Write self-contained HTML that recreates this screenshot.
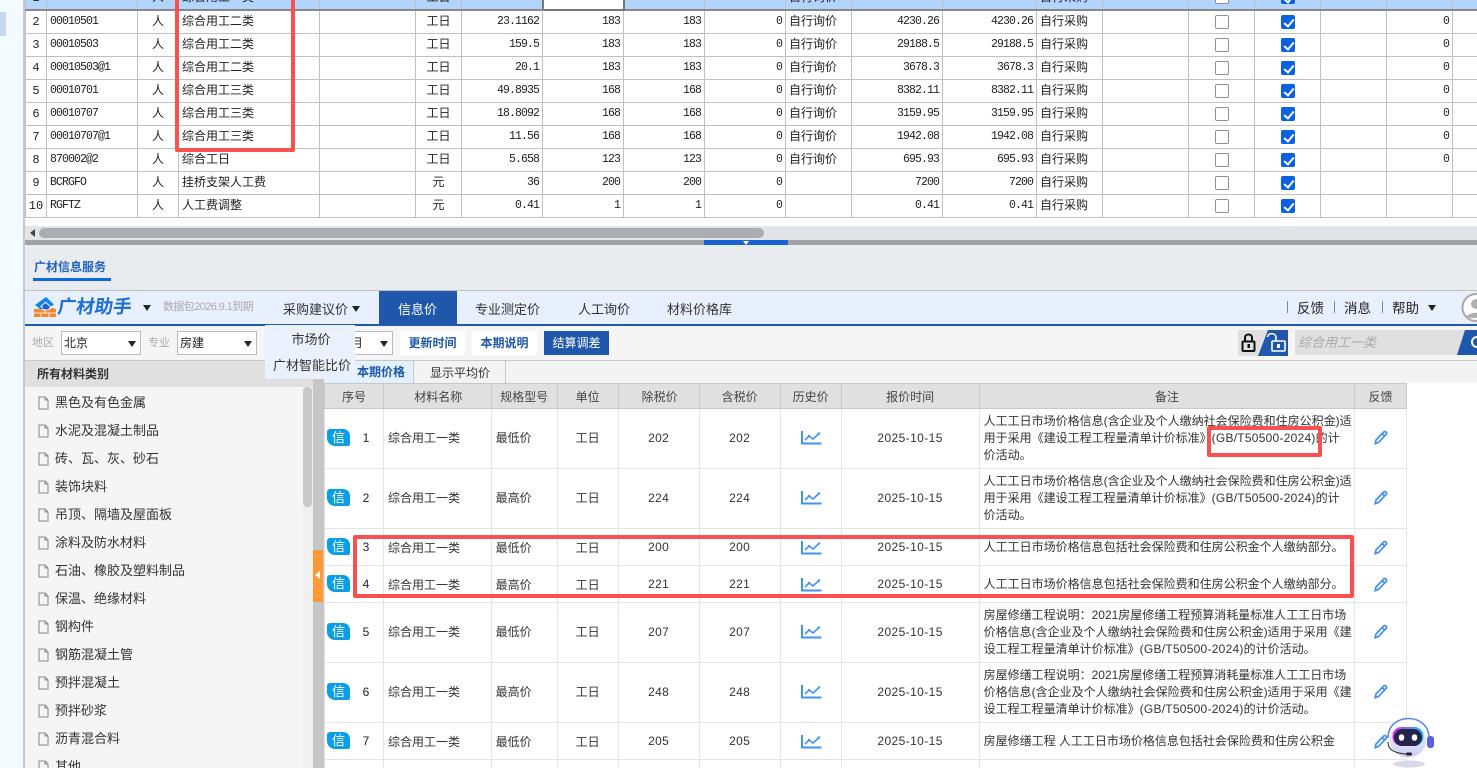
<!DOCTYPE html>
<html lang="zh"><head><meta charset="utf-8"><title>广材信息服务</title>
<style>
*{box-sizing:border-box}
html,body{margin:0;padding:0;width:1477px;height:768px;overflow:hidden;background:#f3fbff;font-family:"Liberation Sans","Noto Sans CJK SC",sans-serif;color:#333;font-size:12px}
body{position:relative}
.a{position:absolute}
.a,.t{white-space:nowrap}
#top{position:absolute;left:25px;top:-15px;border-collapse:collapse;table-layout:fixed;width:1493px;background:#fff;font-family:"Liberation Mono","WenQuanYi Zen Hei",monospace;color:#222}
#top td{height:23px;border:1px solid #c0c0c0;padding:0 3px;font-size:12px;line-height:22px;overflow:hidden;white-space:nowrap}
#top td.n{font-size:11.5px;letter-spacing:-.9px;text-align:right}
#top td.m{text-align:center}
#top td.s{font-size:11.5px;letter-spacing:-.9px}
#top tr.sel td{background:#b3d4fd;border-bottom:2px solid #888}
#top tr.sel td.w{background:#fff;border:2px solid #777}
.c{display:block;width:14px;height:14px;border:1px solid #909090;border-radius:2px;background:#fff;margin:-1px auto 0;position:relative}
.c.y{background:#0b62e0;border-color:#0b62e0}
.c.y:after{content:"";position:absolute;left:4px;top:1.5px;width:4px;height:8px;border:solid #fff;border-width:0 2px 2px 0;transform:rotate(40deg)}
#low{position:absolute;left:324px;top:383px;border-collapse:collapse;table-layout:fixed;width:1082px;background:#fff;color:#333}
#low td,#low th{border:1px solid #e4e4e4;padding:0;text-align:center;font-weight:normal;font-size:12px;position:relative;white-space:nowrap;overflow:hidden}
#low th{background:#e0e0e0;border-color:#c8c8c8;height:25px;color:#444}
#low td.l{text-align:left;padding-left:4px}
#low td.r{text-align:left;padding-left:4px;line-height:17px}
#low td.no{padding-left:24px;color:#222}
#low td.v{letter-spacing:.3px}
#low td.d{letter-spacing:.4px}
#low tr.h td:not(.r){padding-bottom:2px}
#low tr.h td.no{padding-left:24px}
#low tr.h .b{margin-top:-10px}
#low svg[width="21"]{position:relative;left:1px}
.g{letter-spacing:.25px}
.b{position:absolute;left:2px;top:50%;margin-top:-9px;width:23px;height:17px;background:#0a9ee8;color:#fff;border-radius:3px 7px 2px 8px;line-height:17px;font-size:13px;text-align:center}
.tree{left:55px;font-size:13px;color:#333;line-height:18px}
.doc{left:38px}
.car{width:0;height:0;border-left:4.5px solid transparent;border-right:4.5px solid transparent;border-top:6px solid #222}
.sel2{top:331px;height:24px;background:#fff;border:1px solid #bbb;padding-left:2px;line-height:23px;color:#222}
.btn{top:331px;height:24px;width:65px;background:#fff;color:#1f58ab;font-weight:bold;text-align:center;line-height:24px}
.nav{top:301px;font-size:13px;line-height:18px;color:#333}
.red{position:absolute;border:4px solid #fa5050;border-radius:2px}
svg{display:block}
</style></head><body>
<svg width="0" height="0" style="position:absolute"><defs>
<symbol id="d" viewBox="0 0 11 14"><path d="M1 1H7L10 4V13H1Z M7 1V4H10" fill="none" stroke="#888" stroke-width="1"/></symbol>
<symbol id="tr" viewBox="0 0 21 15"><path d="M1 1V13.5H20.5" fill="none" stroke="#3f93f5" stroke-width="2"/><path d="M4 10L8 6L12 9L18 3.5" fill="none" stroke="#3f93f5" stroke-width="1.6"/><circle cx="8" cy="6" r="1.2" fill="#3f93f5"/><circle cx="18" cy="3.5" r="1.2" fill="#3f93f5"/></symbol>
<symbol id="p" viewBox="0 0 14 15"><path d="M2 10L9.5 2.2C10.3 1.4 11.3 1.4 12 2.1C12.8 2.9 12.8 3.8 12 4.6L4.5 12.5L1.2 13.6Z M8.2 3.6L10.8 6.1" fill="none" stroke="#3f8ff0" stroke-width="1.7"/></symbol>
</defs></svg>

<div class="a" style="left:0;top:12px;width:6px;height:24px;background:#c9d7f0"></div>
<div class="a" style="left:23px;top:0;width:2px;height:768px;background:#c4c8cc"></div>

<table id="top"><colgroup><col style="width:21px"><col style="width:91px"><col style="width:41px"><col style="width:141px"><col style="width:96px"><col style="width:46px"><col style="width:81px"><col style="width:81px"><col style="width:81px"><col style="width:81px"><col style="width:66px"><col style="width:91px"><col style="width:94px"><col style="width:66px"><col style="width:86px"><col style="width:66px"><col style="width:66px"><col style="width:66px"><col style="width:66px"><col style="width:66px"></colgroup>
<tr class="sel"><td class="m">1</td><td class="s">00010301</td><td class="m">人</td><td>综合用工一类</td><td></td><td class="m">工日</td><td class="n">13.0116</td><td class="n w">200.6</td><td class="n">200.6</td><td class="n">0</td><td>自行询价</td><td class="n">2517.05</td><td class="n">2517.05</td><td>自行采购</td><td></td><td><span class="c"></span></td><td><span class="c y"></span></td><td></td><td class="n">0</td><td></td></tr>
<tr><td class="m">2</td><td class="s">00010501</td><td class="m">人</td><td>综合用工二类</td><td></td><td class="m">工日</td><td class="n">23.1162</td><td class="n">183</td><td class="n">183</td><td class="n">0</td><td>自行询价</td><td class="n">4230.26</td><td class="n">4230.26</td><td>自行采购</td><td></td><td><span class="c"></span></td><td><span class="c y"></span></td><td></td><td class="n">0</td><td></td></tr>
<tr><td class="m">3</td><td class="s">00010503</td><td class="m">人</td><td>综合用工二类</td><td></td><td class="m">工日</td><td class="n">159.5</td><td class="n">183</td><td class="n">183</td><td class="n">0</td><td>自行询价</td><td class="n">29188.5</td><td class="n">29188.5</td><td>自行采购</td><td></td><td><span class="c"></span></td><td><span class="c y"></span></td><td></td><td class="n">0</td><td></td></tr>
<tr><td class="m">4</td><td class="s">00010503@1</td><td class="m">人</td><td>综合用工二类</td><td></td><td class="m">工日</td><td class="n">20.1</td><td class="n">183</td><td class="n">183</td><td class="n">0</td><td>自行询价</td><td class="n">3678.3</td><td class="n">3678.3</td><td>自行采购</td><td></td><td><span class="c"></span></td><td><span class="c y"></span></td><td></td><td class="n">0</td><td></td></tr>
<tr><td class="m">5</td><td class="s">00010701</td><td class="m">人</td><td>综合用工三类</td><td></td><td class="m">工日</td><td class="n">49.8935</td><td class="n">168</td><td class="n">168</td><td class="n">0</td><td>自行询价</td><td class="n">8382.11</td><td class="n">8382.11</td><td>自行采购</td><td></td><td><span class="c"></span></td><td><span class="c y"></span></td><td></td><td class="n">0</td><td></td></tr>
<tr><td class="m">6</td><td class="s">00010707</td><td class="m">人</td><td>综合用工三类</td><td></td><td class="m">工日</td><td class="n">18.8092</td><td class="n">168</td><td class="n">168</td><td class="n">0</td><td>自行询价</td><td class="n">3159.95</td><td class="n">3159.95</td><td>自行采购</td><td></td><td><span class="c"></span></td><td><span class="c y"></span></td><td></td><td class="n">0</td><td></td></tr>
<tr><td class="m">7</td><td class="s">00010707@1</td><td class="m">人</td><td>综合用工三类</td><td></td><td class="m">工日</td><td class="n">11.56</td><td class="n">168</td><td class="n">168</td><td class="n">0</td><td>自行询价</td><td class="n">1942.08</td><td class="n">1942.08</td><td>自行采购</td><td></td><td><span class="c"></span></td><td><span class="c y"></span></td><td></td><td class="n">0</td><td></td></tr>
<tr><td class="m">8</td><td class="s">870002@2</td><td class="m">人</td><td>综合工日</td><td></td><td class="m">工日</td><td class="n">5.658</td><td class="n">123</td><td class="n">123</td><td class="n">0</td><td>自行询价</td><td class="n">695.93</td><td class="n">695.93</td><td>自行采购</td><td></td><td><span class="c"></span></td><td><span class="c y"></span></td><td></td><td class="n">0</td><td></td></tr>
<tr><td class="m">9</td><td class="s">BCRGFO</td><td class="m">人</td><td>挂桥支架人工费</td><td></td><td class="m">元</td><td class="n">36</td><td class="n">200</td><td class="n">200</td><td class="n">0</td><td></td><td class="n">7200</td><td class="n">7200</td><td>自行采购</td><td></td><td><span class="c"></span></td><td><span class="c y"></span></td><td></td><td></td><td></td></tr>
<tr><td class="m" style="padding:0">10</td><td class="s">RGFTZ</td><td class="m">人</td><td>人工费调整</td><td></td><td class="m">元</td><td class="n">0.41</td><td class="n">1</td><td class="n">1</td><td class="n">0</td><td></td><td class="n">0.41</td><td class="n">0.41</td><td>自行采购</td><td></td><td><span class="c"></span></td><td><span class="c y"></span></td><td></td><td></td><td></td></tr>
</table>

<div class="a" style="left:25px;top:218px;width:1452px;height:8px;background:#fff"></div>
<div class="a" style="left:25px;top:226px;width:1452px;height:14px;background:#e3e4e7"></div>
<div class="a" style="left:39px;top:228px;width:725px;height:10px;background:#abadb3;border-radius:5px"></div>
<div class="a" style="left:30px;top:229px;width:0;height:0;border-top:4px solid transparent;border-bottom:4px solid transparent;border-right:5px solid #444"></div>
<div class="a" style="left:25px;top:240px;width:1452px;height:5px;background:#a0a2a8"></div>
<div class="a" style="left:704px;top:240px;width:84px;height:5px;background:#1763d0"></div>
<div class="a" style="left:743px;top:241px;width:0;height:0;border-left:3px solid transparent;border-right:3px solid transparent;border-top:4px solid #fff"></div>

<div class="a" style="left:25px;top:245px;width:1452px;height:46px;background:#e9ecef"></div>
<div class="a" style="left:34px;top:258px;font-weight:bold;color:#1f62c0;line-height:18px">广材信息服务</div>
<div class="a" style="left:33px;top:278px;width:78px;height:3px;background:#0f67e0"></div>
<div class="a" style="left:25px;top:290px;width:1452px;height:1px;background:#c0c0c0"></div>

<div class="a" style="left:25px;top:291px;width:1452px;height:33px;background:#e8f0fe"></div>
<div class="a" style="left:25px;top:324px;width:1452px;height:2px;background:#1e5aae"></div>
<div class="a" style="left:379px;top:291px;width:78px;height:33px;background:#1f58ab"></div>

<svg class="a" style="left:34px;top:297px" width="22" height="20" viewBox="0 0 22 20"><path d="M12 0L20 7.500L17 9.500L11.500 4.500L6 9.500L10 12H6L1 8Z" fill="#0f86ee"/><path d="M8 9L11.500 6L16 10L14 12.500H10Z" fill="#1c5fc8"/><path d="M0 12H6L10 13.500H14L18 11L22 12V20H0Z" fill="#f5882e"/><path d="M0 16H22M7 16V20M15 16V20M11 12V16" stroke="#fff" stroke-width=".8"/></svg>
<div class="a" style="left:56px;top:295px;font-size:18.5px;font-weight:bold;color:#1e6fd6;line-height:24px;transform:skewX(-8deg);transform-origin:left bottom">广材助手</div>
<div class="a car" style="left:143px;top:305px"></div>
<div class="a" style="left:163px;top:300px;font-size:11px;color:#aaa;line-height:15px;letter-spacing:-.6px">数据包2026.9.1到期</div>
<div class="a nav" style="left:283px">采购建议价</div>
<div class="a car" style="left:352px;top:306px"></div>
<div class="a nav" style="left:398px;color:#fff">信息价</div>
<div class="a nav" style="left:475px">专业测定价</div>
<div class="a nav" style="left:578px">人工询价</div>
<div class="a nav" style="left:667px">材料价格库</div>
<div class="a" style="left:1287px;top:301px;width:1px;height:12px;background:#888"></div>
<div class="a" style="left:1297px;top:299px;font-size:13.5px;line-height:20px;color:#222">反馈</div>
<div class="a" style="left:1334px;top:301px;width:1px;height:12px;background:#888"></div>
<div class="a" style="left:1344px;top:299px;font-size:13.5px;line-height:20px;color:#222">消息</div>
<div class="a" style="left:1382px;top:301px;width:1px;height:12px;background:#888"></div>
<div class="a" style="left:1392px;top:299px;font-size:13.5px;line-height:20px;color:#222">帮助</div>
<div class="a car" style="left:1428px;top:305px"></div>
<svg class="a" style="left:1461px;top:293px" width="16" height="29" viewBox="0 0 16 29"><circle cx="15" cy="14.500" r="13.500" fill="#fff" stroke="#a8a8a8" stroke-width="2"/><circle cx="15" cy="11" r="5" fill="#b0b0b0"/><path d="M5 25C7 18 23 18 25 25Z" fill="#b0b0b0"/></svg>

<div class="a" style="left:25px;top:326px;width:1452px;height:34px;background:#f5f5f5"></div>
<div class="a" style="left:25px;top:360px;width:1452px;height:1px;background:#c8c8c8"></div>
<div class="a" style="left:32px;top:335px;font-size:11px;color:#aaa;line-height:16px">地区</div>
<div class="a sel2" style="left:61px;width:80px">北京</div><div class="a car" style="left:128px;top:341px"></div>
<div class="a" style="left:148px;top:335px;font-size:11px;color:#aaa;line-height:16px">专业</div>
<div class="a sel2" style="left:177px;width:80px">房建</div><div class="a car" style="left:244px;top:341px"></div>
<div class="a sel2" style="left:300px;width:93px;padding-left:50px">月</div><div class="a car" style="left:380px;top:341px"></div>
<div class="a btn" style="left:400px">更新时间</div>
<div class="a btn" style="left:472px">本期说明</div>
<div class="a btn" style="left:544px;background:#1f58ab;color:#fff;font-weight:normal">结算调差</div>
<div class="a" style="left:1238px;top:330px;width:50px;height:26px;background:#e0e0e0"></div>
<svg class="a" style="left:1238px;top:330px" width="50" height="26" viewBox="0 0 50 26"><path d="M20 26L30 0H50V26Z" fill="#1f58ab"/><rect x="4.500" y="11.500" width="12" height="9.500" rx="1" fill="#e0e0e0" stroke="#111" stroke-width="2"/><path d="M7 11V7.500C7 3.500 14 3.500 14 7.500V11" fill="none" stroke="#111" stroke-width="2"/><rect x="9.500" y="14" width="2.500" height="4" fill="#111"/><rect x="34" y="11" width="13" height="10" rx="1" fill="none" stroke="#fff" stroke-width="1.600"/><path d="M29.500 7C30 2.500 37.500 2.500 38 7V11" fill="none" stroke="#fff" stroke-width="1.600"/><rect x="39" y="14" width="3" height="4" fill="#fff"/></svg>
<div class="a" style="left:1295px;top:330px;width:182px;height:25px;background:#e0e0e0"></div>
<div class="a" style="left:1298px;top:333px;font-size:13px;font-style:italic;color:#aaa;line-height:19px">综合用工一类</div>
<svg class="a" style="left:1457px;top:330px" width="20" height="25" viewBox="0 0 20 25"><path d="M0 25L8 0H20V25Z" fill="#1f58ab"/><circle cx="20" cy="12" r="5" fill="none" stroke="#fff" stroke-width="2"/></svg>

<div class="a" style="left:25px;top:361px;width:288px;height:407px;background:#f5f5f5"></div>
<div class="a" style="left:25px;top:361px;width:288px;height:26px;background:#e0e0e0"></div>
<div class="a" style="left:37px;top:366px;font-weight:bold;color:#333;line-height:17px">所有材料类别</div>
<div class="a" style="left:303px;top:387px;width:10px;height:381px;background:#f0f0f0"></div>
<div class="a" style="left:303px;top:387px;width:9px;height:120px;background:#c9c9c9;border-radius:4px"></div>
<div class="a" style="left:313px;top:361px;width:11px;height:407px;background:#c6c6c6"></div>
<div class="a" style="left:313px;top:550px;width:10px;height:52px;background:#ff9933"></div>
<div class="a" style="left:315px;top:571px;width:0;height:0;border-top:4.500px solid transparent;border-bottom:4.500px solid transparent;border-right:5px solid #fff"></div>

<svg class="a doc" style="top:396px" width="11" height="14"><use href="#d"/></svg><div class="a tree" style="top:394px">黑色及有色金属</div>
<svg class="a doc" style="top:424px" width="11" height="14"><use href="#d"/></svg><div class="a tree" style="top:422px">水泥及混凝土制品</div>
<svg class="a doc" style="top:452px" width="11" height="14"><use href="#d"/></svg><div class="a tree" style="top:450px">砖、瓦、灰、砂石</div>
<svg class="a doc" style="top:480px" width="11" height="14"><use href="#d"/></svg><div class="a tree" style="top:478px">装饰块料</div>
<svg class="a doc" style="top:508px" width="11" height="14"><use href="#d"/></svg><div class="a tree" style="top:506px">吊顶、隔墙及屋面板</div>
<svg class="a doc" style="top:536px" width="11" height="14"><use href="#d"/></svg><div class="a tree" style="top:534px">涂料及防水材料</div>
<svg class="a doc" style="top:564px" width="11" height="14"><use href="#d"/></svg><div class="a tree" style="top:562px">石油、橡胶及塑料制品</div>
<svg class="a doc" style="top:592px" width="11" height="14"><use href="#d"/></svg><div class="a tree" style="top:590px">保温、绝缘材料</div>
<svg class="a doc" style="top:620px" width="11" height="14"><use href="#d"/></svg><div class="a tree" style="top:618px">钢构件</div>
<svg class="a doc" style="top:648px" width="11" height="14"><use href="#d"/></svg><div class="a tree" style="top:646px">钢筋混凝土管</div>
<svg class="a doc" style="top:676px" width="11" height="14"><use href="#d"/></svg><div class="a tree" style="top:674px">预拌混凝土</div>
<svg class="a doc" style="top:704px" width="11" height="14"><use href="#d"/></svg><div class="a tree" style="top:702px">预拌砂浆</div>
<svg class="a doc" style="top:732px" width="11" height="14"><use href="#d"/></svg><div class="a tree" style="top:730px">沥青混合料</div>
<svg class="a doc" style="top:760px" width="11" height="14"><use href="#d"/></svg><div class="a tree" style="top:758px">其他</div>

<div class="a" style="left:324px;top:361px;width:1153px;height:22px;background:#f3f3f3"></div>
<div class="a" style="left:324px;top:361px;width:90px;height:22px;background:#e3f0fe;border-right:1px solid #c8c8c8"></div>
<div class="a" style="left:357px;top:364px;font-weight:bold;color:#1f58ab;line-height:17px">本期价格</div>
<div class="a" style="left:415px;top:361px;width:91px;height:22px;border-right:1px solid #c8c8c8;text-align:center;line-height:24px">显示平均价</div>
<div class="a" style="left:324px;top:383px;width:1153px;height:385px;background:#fff"></div>

<div class="a" style="left:0;top:0;width:1477px;height:768px;overflow:hidden">
<table id="low"><colgroup><col style="width:59px"><col style="width:107.600px"><col style="width:66px"><col style="width:61px"><col style="width:81px"><col style="width:81px"><col style="width:61px"><col style="width:138px"><col style="width:375.500px"><col style="width:51.900px"></colgroup>
<tr><th>序号</th><th style="padding-left:2px">材料名称</th><th>规格型号</th><th>单位</th><th style="padding-left:2px">除税价</th><th>含税价</th><th>历史价</th><th>报价时间</th><th>备注</th><th>反馈</th></tr>
<tr class="h" style="height:60px"><td class="no"><span class="b">信</span>1</td><td class="l">综合用工一类</td><td class="l">最低价</td><td>工日</td><td class="v">202</td><td class="v">202</td><td><svg width="21" height="15" style="margin:auto"><use href="#tr"/></svg></td><td class="d">2025-10-15</td><td class="r">人工工日市场价格信息(含企业及个人缴纳社会保险费和住房公积金)适<br>用于采用《建设工程工程量清单计价标准》<span class="g">(GB/T50500-2024)</span>的计<br>价活动。</td><td><svg width="14" height="15" style="margin:auto"><use href="#p"/></svg></td></tr>
<tr class="h" style="height:60px"><td class="no"><span class="b">信</span>2</td><td class="l">综合用工一类</td><td class="l">最高价</td><td>工日</td><td class="v">224</td><td class="v">224</td><td><svg width="21" height="15" style="margin:auto"><use href="#tr"/></svg></td><td class="d">2025-10-15</td><td class="r">人工工日市场价格信息(含企业及个人缴纳社会保险费和住房公积金)适<br>用于采用《建设工程工程量清单计价标准》<span class="g">(GB/T50500-2024)</span>的计<br>价活动。</td><td><svg width="14" height="15" style="margin:auto"><use href="#p"/></svg></td></tr>
<tr style="height:37px"><td class="no"><span class="b">信</span>3</td><td class="l">综合用工一类</td><td class="l">最低价</td><td>工日</td><td class="v">200</td><td class="v">200</td><td><svg width="21" height="15" style="margin:auto"><use href="#tr"/></svg></td><td class="d">2025-10-15</td><td class="r">人工工日市场价格信息包括社会保险费和住房公积金个人缴纳部分。</td><td><svg width="14" height="15" style="margin:auto"><use href="#p"/></svg></td></tr>
<tr style="height:37px"><td class="no"><span class="b">信</span>4</td><td class="l">综合用工一类</td><td class="l">最高价</td><td>工日</td><td class="v">221</td><td class="v">221</td><td><svg width="21" height="15" style="margin:auto"><use href="#tr"/></svg></td><td class="d">2025-10-15</td><td class="r">人工工日市场价格信息包括社会保险费和住房公积金个人缴纳部分。</td><td><svg width="14" height="15" style="margin:auto"><use href="#p"/></svg></td></tr>
<tr class="h" style="height:60px"><td class="no"><span class="b">信</span>5</td><td class="l">综合用工一类</td><td class="l">最低价</td><td>工日</td><td class="v">207</td><td class="v">207</td><td><svg width="21" height="15" style="margin:auto"><use href="#tr"/></svg></td><td class="d">2025-10-15</td><td class="r">房屋修缮工程说明：2021房屋修缮工程预算消耗量标准人工工日市场<br>价格信息(含企业及个人缴纳社会保险费和住房公积金)适用于采用《建<br>设工程工程量清单计价标准》<span class="g">(GB/T50500-2024)</span>的计价活动。</td><td><svg width="14" height="15" style="margin:auto"><use href="#p"/></svg></td></tr>
<tr class="h" style="height:60px"><td class="no"><span class="b">信</span>6</td><td class="l">综合用工一类</td><td class="l">最高价</td><td>工日</td><td class="v">248</td><td class="v">248</td><td><svg width="21" height="15" style="margin:auto"><use href="#tr"/></svg></td><td class="d">2025-10-15</td><td class="r">房屋修缮工程说明：2021房屋修缮工程预算消耗量标准人工工日市场<br>价格信息(含企业及个人缴纳社会保险费和住房公积金)适用于采用《建<br>设工程工程量清单计价标准》<span class="g">(GB/T50500-2024)</span>的计价活动。</td><td><svg width="14" height="15" style="margin:auto"><use href="#p"/></svg></td></tr>
<tr style="height:37px"><td class="no"><span class="b">信</span>7</td><td class="l">综合用工一类</td><td class="l">最低价</td><td>工日</td><td class="v">205</td><td class="v">205</td><td><svg width="21" height="15" style="margin:auto"><use href="#tr"/></svg></td><td class="d">2025-10-15</td><td class="r">房屋修缮工程 人工工日市场价格信息包括社会保险费和住房公积金</td><td><svg width="14" height="15" style="margin:auto"><use href="#p"/></svg></td></tr>
<tr style="height:37px"><td></td><td></td><td></td><td></td><td></td><td></td><td></td><td></td><td></td><td></td></tr>
</table>
</div>

<div class="a" style="left:265px;top:325px;width:90px;height:54px;background:#eaf1fd"></div>
<div class="a" style="left:266px;top:331px;width:90px;text-align:center;font-size:13px;line-height:18px">市场价</div>
<div class="a" style="left:267px;top:357px;width:90px;text-align:center;font-size:13px;line-height:18px">广材智能比价</div>

<div class="red" style="left:175px;top:-6px;width:120px;height:158px"></div>
<div class="red" style="left:353px;top:535px;width:1001px;height:63px"></div>
<div class="red" style="left:1207px;top:426px;width:115px;height:31px"></div>

<svg class="a" style="left:1385px;top:714px" width="54" height="54" viewBox="0 0 54 54">
<defs><linearGradient id="g" x1="0" y1="0" x2="0" y2="1"><stop offset="0" stop-color="#fff"/><stop offset="1" stop-color="#c9cdf5"/></linearGradient><linearGradient id="v" x1="0" y1="0" x2="1" y2="0"><stop offset="0" stop-color="#d030e0"/><stop offset="1" stop-color="#20c0f0"/></linearGradient></defs>
<ellipse cx="24" cy="50" rx="16" ry="3.500" fill="#c8cadf" opacity=".7"/>
<path d="M3 24C3 -2 44 -2 44 24" fill="none" stroke="#5a86ea" stroke-width="1.500"/>
<rect x="42" y="22" width="7" height="12" rx="3" fill="#5a60e0"/>
<circle cx="23" cy="25" r="18.500" fill="url(#g)"/>
<rect x="7.500" y="13" width="31" height="19" rx="9" fill="url(#v)"/>
<rect x="9" y="15" width="28" height="17" rx="8.500" fill="#24244a"/>
<ellipse cx="16.500" cy="23.500" rx="2.800" ry="3.300" fill="#fff"/><ellipse cx="29.500" cy="23.500" rx="2.800" ry="3.300" fill="#fff"/>
<path d="M3 28C3 36 9 39 21 40" fill="none" stroke="#222" stroke-width="1"/><rect x="21" y="38.500" width="6" height="3" rx="1.500" fill="#222"/>
</svg>
</body></html>
